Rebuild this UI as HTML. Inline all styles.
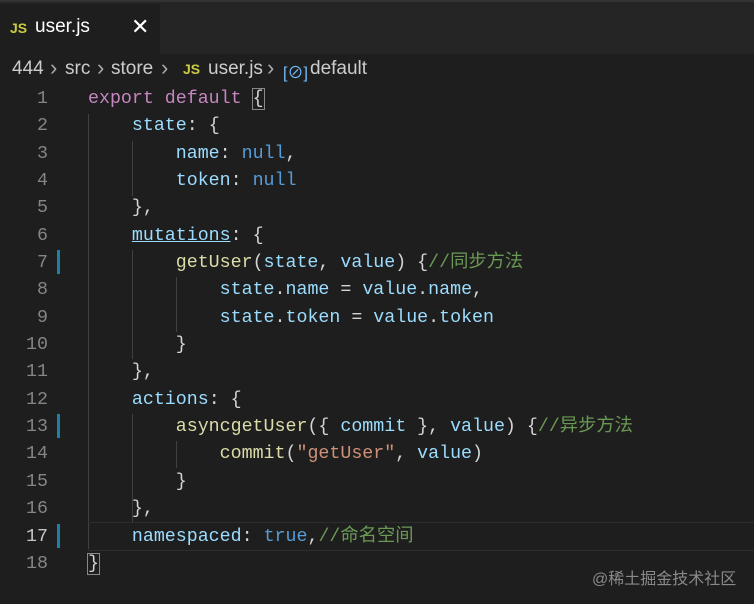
<html><head><style>
body{margin:0;width:754px;height:604px;background:#1e1e1e;overflow:hidden;font-family:"Liberation Sans","Noto Sans CJK SC",sans-serif;position:relative}
.tabbar{position:absolute;top:0;left:0;width:754px;height:52px;background:#252526;border-top:2px solid #333}
.tab{position:absolute;left:0;top:2px;width:160px;height:50px;background:#1e1e1e;color:#fff;font-size:19px}
.js{color:#cbcb41;font-weight:bold;font-size:14px}
.bc{position:absolute;top:58px;color:#ccc;font-size:19px;white-space:pre}
.sp{color:#aaa;font-size:22px;top:55px}
.code{position:absolute;top:86px;left:0;font-family:"Liberation Mono","Noto Sans CJK SC",monospace;font-size:18.3px}
.l{height:27.35px;line-height:27.35px;white-space:pre;position:relative}
.n{display:inline-block;width:48px;text-align:right;color:#858585}
.c{position:absolute;left:88px;top:0;color:#d4d4d4}
.k{color:#c586c0}.p{color:#9cdcfe}.b{color:#569cd6}.f{color:#dcdcaa}.s{color:#ce9178}.g{color:#6a9955}
.m{position:absolute;left:57px;width:3px;height:24px;background:#1b81a8}
.gd{position:absolute;width:1px;background:#404040}
</style></head><body>
<div class="tabbar"><div class="tab"><span class="js" style="position:absolute;left:10px;top:16px">JS</span><span style="position:absolute;left:35px;top:12px">user.js</span><span style="position:absolute;left:131px;top:10px;font-size:22px">✕</span></div></div>
<div class="bc" style="left:12px">444</div>
<div class="bc sp" style="left:50px">›</div>
<div class="bc" style="left:65px">src</div>
<div class="bc sp" style="left:97px">›</div>
<div class="bc" style="left:111px">store</div>
<div class="bc sp" style="left:161px">›</div>
<div class="bc" style="left:183px;top:61px"><span class="js">JS</span></div>
<div class="bc" style="left:208px">user.js</div>
<div class="bc sp" style="left:267px">›</div>
<div class="bc" style="left:283px;top:59px;color:#75beff;font-size:16px">[⊘]</div>
<div class="bc" style="left:310px">default</div>
<div class="gd" style="left:88px;top:114px;height:435px"></div>
<div class="gd" style="left:132px;top:141px;height:55px"></div>
<div class="gd" style="left:132px;top:250px;height:109px"></div>
<div class="gd" style="left:176px;top:277px;height:55px"></div>
<div class="gd" style="left:132px;top:414px;height:109px"></div>
<div class="gd" style="left:176px;top:441px;height:27px"></div>
<div style="position:absolute;left:88px;top:522px;width:666px;height:27px;border-top:1px solid #2d2d2d;border-bottom:1px solid #2d2d2d"></div>
<div class="code">
<div class="l"><span class="n">1</span><span class="c"><span class="k">export default</span> <span style="outline:1px solid #888">{</span></span></div>
<div class="l"><span class="n">2</span><span class="c">    <span class="p">state</span>: {</span></div>
<div class="l"><span class="n">3</span><span class="c">        <span class="p">name</span>: <span class="b">null</span>,</span></div>
<div class="l"><span class="n">4</span><span class="c">        <span class="p">token</span>: <span class="b">null</span></span></div>
<div class="l"><span class="n">5</span><span class="c">    },</span></div>
<div class="l"><span class="n">6</span><span class="c">    <span class="p" style="text-decoration:underline">mutations</span>: {</span></div>
<div class="l"><span class="m"></span><span class="n">7</span><span class="c">        <span class="f">getUser</span>(<span class="p">state</span>, <span class="p">value</span>) {<span class="g">//同步方法</span></span></div>
<div class="l"><span class="n">8</span><span class="c">            <span class="p">state</span>.<span class="p">name</span> = <span class="p">value</span>.<span class="p">name</span>,</span></div>
<div class="l"><span class="n">9</span><span class="c">            <span class="p">state</span>.<span class="p">token</span> = <span class="p">value</span>.<span class="p">token</span></span></div>
<div class="l"><span class="n">10</span><span class="c">        }</span></div>
<div class="l"><span class="n">11</span><span class="c">    },</span></div>
<div class="l"><span class="n">12</span><span class="c">    <span class="p">actions</span>: {</span></div>
<div class="l"><span class="m"></span><span class="n">13</span><span class="c">        <span class="f">asyncgetUser</span>({ <span class="p">commit</span> }, <span class="p">value</span>) {<span class="g">//异步方法</span></span></div>
<div class="l"><span class="n">14</span><span class="c">            <span class="f">commit</span>(<span class="s">"getUser"</span>, <span class="p">value</span>)</span></div>
<div class="l"><span class="n">15</span><span class="c">        }</span></div>
<div class="l"><span class="n">16</span><span class="c">    },</span></div>
<div class="l"><span class="m"></span><span class="n" style="color:#c6c6c6">17</span><span class="c">    <span class="p">namespaced</span>: <span class="b">true</span>,<span class="g">//命名空间</span></span></div>
<div class="l"><span class="n">18</span><span class="c"><span style="outline:1px solid #888">}</span></span></div>
</div>
<div style="position:absolute;left:592px;top:565px;color:#8a8a8a;font-size:16px">@稀土掘金技术社区</div>
</body></html>
